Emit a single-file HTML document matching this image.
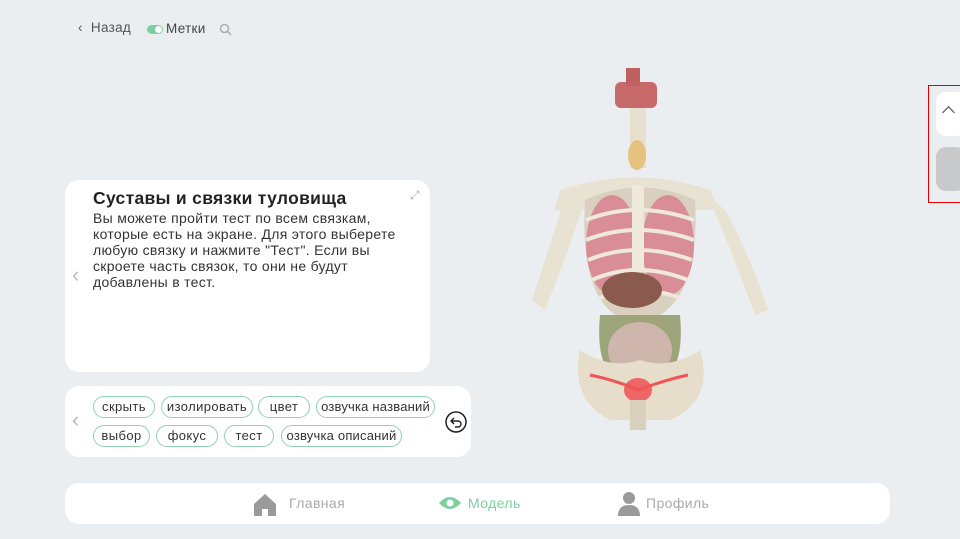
<!DOCTYPE html><html><head><meta charset="utf-8"><style>
body{margin:0;width:960px;height:539px;background:#ebeef0;font-family:"Liberation Sans",sans-serif;position:relative;overflow:hidden;color:#333}
.a{position:absolute}
.card{background:#fff;border-radius:14px}
.chip{position:absolute;height:22px;border:1.5px solid #8fd4ae;border-radius:12px;box-sizing:border-box;font-size:13px;letter-spacing:0.4px;line-height:19px;text-align:center;color:#333}
</style></head><body>
<div class="a" style="left:78px;top:20px;font-size:13.5px;letter-spacing:0.3px;color:#555">‹&nbsp; Назад</div>
<div class="a" style="left:147px;top:25px;width:16px;height:9px;border-radius:5px;background:#7ccf9f"><div style="position:absolute;right:1px;top:1px;width:7px;height:7px;border-radius:50%;background:#fff"></div></div>
<div class="a" style="left:166px;top:21px;font-size:13.5px;letter-spacing:0.3px;color:#444">Метки</div>
<svg class="a" style="left:219px;top:23px" width="13" height="13"><circle cx="5.5" cy="5.5" r="4" fill="none" stroke="#aaa" stroke-width="1.5"/><line x1="8.5" y1="8.5" x2="12" y2="12" stroke="#aaa" stroke-width="1.5"/></svg>

<div class="a card" style="left:65px;top:180px;width:365px;height:192px"></div>
<div class="a" style="left:93px;top:188px;font-size:17.5px;letter-spacing:0.3px;font-weight:bold;color:#222">Суставы и связки туловища</div>
<div class="a" style="left:93px;top:210px;width:305px;font-size:14px;letter-spacing:0.3px;line-height:16px;color:#333">Вы можете пройти тест по всем связкам, которые есть на экране. Для этого выберете любую связку и нажмите "Тест". Если вы скроете часть связок, то они не будут добавлены в тест.</div>
<div class="a" style="left:410px;top:188px;font-size:12px;color:#aaa">⤢</div>
<div class="a" style="left:72px;top:262px;font-size:22px;color:#bbb">‹</div>

<div class="a card" style="left:65px;top:386px;width:406px;height:71px"></div>
<div class="a" style="left:72px;top:407px;font-size:22px;color:#bbb">‹</div>
<div class="chip" style="left:93px;top:396px;width:62px">скрыть</div>
<div class="chip" style="left:161px;top:396px;width:92px">изолировать</div>
<div class="chip" style="left:258px;top:396px;width:52px">цвет</div>
<div class="chip" style="left:316px;top:396px;width:119px;letter-spacing:0.2px">озвучка названий</div>
<div class="chip" style="left:93px;top:425px;width:57px">выбор</div>
<div class="chip" style="left:156px;top:425px;width:62px">фокус</div>
<div class="chip" style="left:224px;top:425px;width:50px">тест</div>
<div class="chip" style="left:281px;top:425px;width:121px;letter-spacing:0.2px">озвучка описаний</div>
<svg class="a" style="left:444px;top:410px" width="24" height="24"><circle cx="12" cy="12" r="10" fill="none" stroke="#222" stroke-width="1.5"/><path d="M10 8 L7 11 L10 14 M7 11 H14 A3 3 0 0 1 14 17 H11" fill="none" stroke="#222" stroke-width="1.4"/></svg>

<div class="a card" style="left:65px;top:483px;width:825px;height:41px"></div>
<svg class="a" style="left:252px;top:491px" width="26" height="26"><path d="M2 13 L13 3 L24 13 V25 H16 V18 H10 V25 H2Z" fill="#9a9a9a"/></svg>
<div class="a" style="left:289px;top:495px;font-size:14px;letter-spacing:0.4px;color:#aaa">Главная</div>
<svg class="a" style="left:438px;top:495px" width="24" height="16"><path d="M1 8 Q12 -4 23 8 Q12 20 1 8Z" fill="#7ccf9f"/><circle cx="12" cy="8" r="3.5" fill="#fff"/></svg>
<div class="a" style="left:468px;top:495px;font-size:14px;letter-spacing:0.4px;color:#7ccf9f">Модель</div>
<svg class="a" style="left:617px;top:491px" width="24" height="26"><circle cx="12" cy="7" r="6" fill="#9a9a9a"/><path d="M1 25 Q1 14 12 14 Q23 14 23 25Z" fill="#9a9a9a"/></svg>
<div class="a" style="left:646px;top:495px;font-size:14px;letter-spacing:0.4px;color:#aaa">Профиль</div>

<div class="a" style="left:928px;top:85px;width:31px;height:116px;border:1px solid #e00000"></div>
<div class="a" style="left:936px;top:92px;width:30px;height:44px;background:#fff;border-radius:10px"></div>
<div class="a" style="left:944px;top:108px;width:8px;height:8px;border-left:1.3px solid #444;border-top:1.3px solid #444;transform:rotate(45deg)"></div>
<div class="a" style="left:936px;top:147px;width:30px;height:44px;background:#c8c9cb;border-radius:10px"></div>

<svg class="a" style="left:520px;top:60px" width="270" height="380">
<rect x="95" y="22" width="42" height="26" rx="6" fill="#c86a6a"/>
<rect x="106" y="8" width="14" height="18" fill="#c06060"/>
<rect x="110" y="48" width="16" height="60" fill="#e8e0cf"/>
<ellipse cx="117" cy="95" rx="9" ry="15" fill="#e7c27e"/>
<path d="M40 130 Q115 105 190 130 L200 150 L170 150 L117 125 L64 150 L34 150Z" fill="#e8e2d2"/>
<path d="M46 135 Q25 200 12 240 L25 250 Q45 200 62 150Z" fill="#e8e2d2"/>
<path d="M188 135 Q215 200 235 255 L248 250 Q230 195 205 150Z" fill="#e8e2d2"/>
<path d="M65 140 Q60 230 95 255 L140 255 Q180 230 175 140 Q120 115 65 140Z" fill="#d9d0bf"/>
<ellipse cx="92" cy="185" rx="26" ry="50" fill="#d98e97"/>
<ellipse cx="148" cy="185" rx="26" ry="50" fill="#d98e97"/>
<g stroke="#efe9dc" stroke-width="4" fill="none">
<path d="M66 160 Q117 140 174 160"/><path d="M66 180 Q117 160 174 180"/><path d="M68 200 Q117 180 172 200"/><path d="M72 220 Q117 200 168 220"/><path d="M80 238 Q117 222 160 238"/></g>
<rect x="112" y="125" width="12" height="85" fill="#efe9dc"/>
<ellipse cx="112" cy="230" rx="30" ry="18" fill="#8b5a4e"/>
<path d="M80 255 Q75 310 100 320 L140 320 Q165 310 160 255Z" fill="#9fa57a"/>
<ellipse cx="120" cy="290" rx="32" ry="28" fill="#cfb6ad"/>
<path d="M60 290 Q50 340 90 360 L150 360 Q195 340 180 290 Q150 310 120 300 Q90 310 60 290Z" fill="#e6ddca"/>
<ellipse cx="118" cy="330" rx="14" ry="12" fill="#e66"/>
<path d="M70 315 Q95 320 118 330 Q145 320 168 315" stroke="#e55" stroke-width="3" fill="none"/>
<rect x="110" y="340" width="16" height="30" fill="#d9cfbd"/>
</svg>
</body></html>
